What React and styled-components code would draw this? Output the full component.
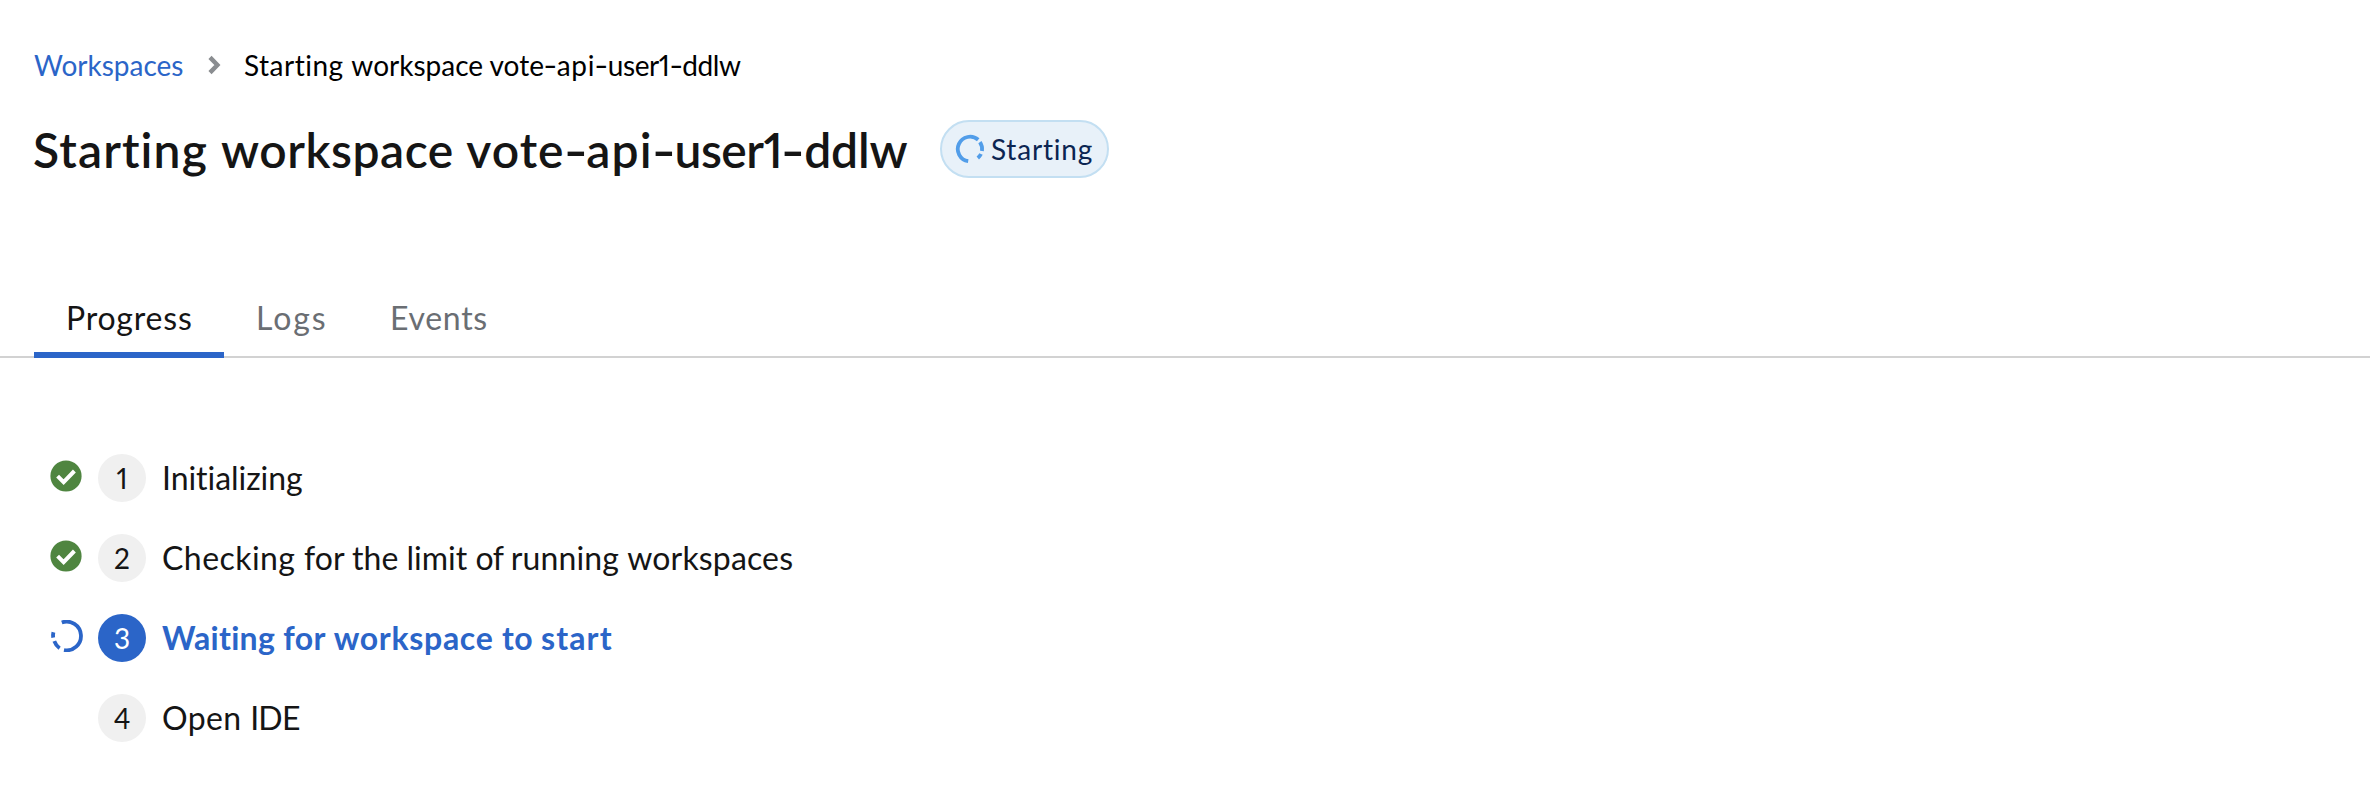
import React from "react";
import styled, { createGlobalStyle } from "styled-components";

const GlobalStyle = createGlobalStyle`
  * { box-sizing: border-box; }
  body {
    margin: 0;
    background: #fff;
    color: #151515;
    font-family: Lato, "Open Sans", sans-serif;
    font-kerning: normal;
    font-variant-ligatures: none;
  }
`;

const Page = styled.main`
  display: flex;
  flex-direction: column;
  width: 100%;
  min-height: 786px;
  overflow: hidden;
`;

const Header = styled.header`
  display: flex;
  flex-direction: column;
  padding: 43px 34px 0;
`;

const Breadcrumb = styled.nav`
  display: flex;
  align-items: center;
  height: 44px;
  font-size: 28px;
  line-height: 44px;
  color: #000;
  white-space: pre;
`;

const BreadcrumbLink = styled.a`
  width: 150px;
  color: #2b65c8;
  text-decoration: none;
`;

const Chevron = styled.svg`
  width: 13px;
  height: 20px;
  margin: 0 23px 0 24px;
`;

const TitleRow = styled.div`
  display: flex;
  align-items: center;
  height: 58px;
  margin-top: 33px;
`;

const Title = styled.h1`
  width: 906px;
  margin: 2px 0 0 -1px;
  font-size: 48px;
  font-weight: 600;
  line-height: 58px;
  white-space: pre;
`;

const Word = styled.span`
  letter-spacing: ${(p) => p.$track || 0}px;
  font-variant-numeric: proportional-nums;
`;

const Dash = styled.span`
  display: inline-block;
  width: 0.452em;
  text-align: center;
  transform: scaleX(1.35);
`;

const Badge = styled.span`
  display: flex;
  align-items: center;
  width: 169px;
  height: 58px;
  margin-left: 1px;
  padding-left: 13px;
  border: 2px solid #c3dff2;
  border-radius: 29px;
  background: #e8f1f9;
  color: #0b2552;
  font-size: 28px;
  line-height: 54px;
`;

const BadgeIcon = styled.svg`
  width: 30px;
  height: 30px;
  margin-right: 6px;
`;

const BadgeText = styled.span`
  letter-spacing: 0.8px;
`;

const Tabs = styled.div`
  display: flex;
  height: 74px;
  margin-top: 106px;
  padding-left: 34px;
  box-shadow: inset 0 -2px #d2d2d2;
`;

const Tab = styled.button`
  width: ${(p) => p.$width}px;
  height: 74px;
  padding: 0 0 1px 32px;
  border: 0;
  border-bottom: 6px solid ${(p) => (p.$active ? "#2b65c8" : "transparent")};
  background: none;
  color: ${(p) => (p.$active ? "#151515" : "#6a6e73")};
  font: 32px/48px Lato, sans-serif;
  letter-spacing: ${(p) => p.$track}px;
  text-align: left;
`;

const Steps = styled.ol`
  display: flex;
  flex-direction: column;
  gap: 32px;
  margin: 96px 0 0;
  padding: 0 0 0 50px;
  list-style: none;
`;

const Step = styled.li`
  display: flex;
  align-items: center;
  height: 48px;
`;

const StepStatus = styled.span`
  display: flex;
  width: 48px;
  height: 36px;
  padding-bottom: 4px;
`;

const StatusIcon = styled.svg`
  width: 34px;
  height: 32px;
`;

const StepNumber = styled.span`
  display: flex;
  align-items: center;
  justify-content: center;
  width: 48px;
  height: 48px;
  border-radius: 50%;
  background: ${(p) => (p.$active ? "#2b65c8" : "#f0f0f0")};
  color: ${(p) => (p.$active ? "#fff" : "#151515")};
  font-size: 28px;
  font-variant-numeric: proportional-nums;
  line-height: 48px;
`;

const StepLabel = styled.span`
  margin-left: 16px;
  padding-bottom: 1px;
  color: ${(p) => (p.$active ? "#2b65c8" : "#151515")};
  font-size: 32px;
  font-weight: ${(p) => (p.$active ? 700 : 400)};
  line-height: 45px;
  white-space: pre;
`;

const breadcrumbWords = [
  ["Starting ", 0.5], ["workspace ", 0], ["vote", 0], ["-"], ["api", 0.7],
  ["-"], ["user1", -0.4], ["-"], ["ddlw", -0.4],
];
const titleWords = [
  ["Starting ", 1.12], ["workspace ", 0.5], ["vote", 1.07], ["-"], ["api", 1.1],
  ["-"], ["user1", -0.5], ["-"], ["ddlw", -0.1],
];
const tabs = [
  { label: "Progress", width: 190, track: 0.8, active: true },
  { label: "Logs", width: 134, track: 1.9 },
  { label: "Events", width: 160, track: 0.7 },
];
const steps = [
  { status: "done", words: [["Initializing", -0.05]] },
  {
    status: "done",
    words: [["Checking ", 0.45], ["for ", 0], ["the ", 0], ["limit ", 0], ["of ", -0.4], ["running ", 0.1], ["workspaces", 0.15]],
  },
  {
    status: "active",
    words: [["Waiting ", 0.3], ["for ", 0.5], ["workspace ", 0.7], ["to ", 0.4], ["start", 1.1]],
  },
  { status: "pending", words: [["Open ", 0.4], ["IDE", -0.8]] },
];

function Words({ items }) {
  return items.map(([text, track], i) =>
    text === "-" ? <Dash key={i}>-</Dash> : <Word key={i} $track={track}>{text}</Word>
  );
}

function Status({ status }) {
  if (status === "done") {
    return (
      <StatusIcon viewBox="0 0 34 32">
        <circle cx="16" cy="16" r="15.6" fill="#4f8540" />
        <path d="M7.6 16.2 L13.6 22.2 L24.4 11" fill="none" stroke="#fff" strokeWidth="4" />
      </StatusIcon>
    );
  }
  if (status === "active") {
    return (
      <StatusIcon viewBox="0 0 34 32" fill="none" stroke="#2b65c8" strokeWidth="3.8">
        <path d="M11.8 2.5 A14.3 14.3 0 1 1 14 30" />
        <path d="M9.6 28.2 A14.3 14.3 0 0 1 4.3 21.2" />
        <path d="M3.2 17.6 A14.3 14.3 0 0 1 3.4 12.2" />
      </StatusIcon>
    );
  }
  return null;
}

export default function App() {
  return (
    <>
      <GlobalStyle />
      <Page>
        <Header>
          <Breadcrumb>
            <BreadcrumbLink>Workspaces</BreadcrumbLink>
            <Chevron viewBox="0 0 13 20">
              <path d="M2 2.4 L9.4 10 L2 17.6" fill="none" stroke="#8a8d90" strokeWidth="4.4" />
            </Chevron>
            <span><Words items={breadcrumbWords} /></span>
          </Breadcrumb>
          <TitleRow>
            <Title><Words items={titleWords} /></Title>
            <Badge>
              <BadgeIcon viewBox="0 0 30 30" fill="none" stroke="#519de9" strokeWidth="3.8">
                <path d="M13.2 27.2 A12.3 12.3 0 1 1 23.2 5.8" />
                <path d="M24.9 8.2 A12.3 12.3 0 0 1 27 16.9" />
                <path d="M26 20 A12.3 12.3 0 0 1 22.8 24" />
              </BadgeIcon>
              <BadgeText>Starting</BadgeText>
            </Badge>
          </TitleRow>
        </Header>
        <Tabs>
          {tabs.map((t) => (
            <Tab key={t.label} $width={t.width} $track={t.track} $active={t.active}>{t.label}</Tab>
          ))}
        </Tabs>
        <Steps>
          {steps.map((s, i) => (
            <Step key={i}>
              <StepStatus><Status status={s.status} /></StepStatus>
              <StepNumber $active={s.status === "active"}>{i + 1}</StepNumber>
              <StepLabel $active={s.status === "active"}><Words items={s.words} /></StepLabel>
            </Step>
          ))}
        </Steps>
      </Page>
    </>
  );
}
